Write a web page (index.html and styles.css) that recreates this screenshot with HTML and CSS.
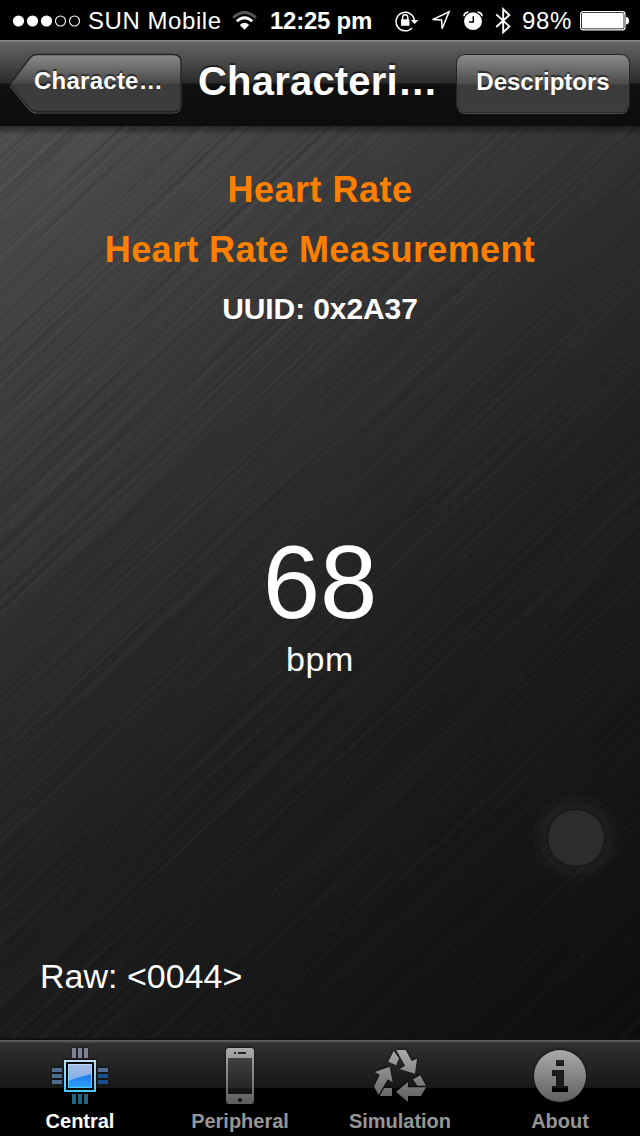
FILE: index.html
```html
<!DOCTYPE html>
<html lang="en">
<head>
<meta charset="utf-8">
<title>Heart Rate Measurement</title>
<link rel="stylesheet" href="styles.css">
</head>
<body>
<div class="app">
  <header class="status">
    <svg class="signal" width="70" height="14" viewBox="0 0 70 14"><g fill="#fff"><circle cx="6.5" cy="7" r="5.6"/><circle cx="20.5" cy="7" r="5.6"/><circle cx="34.5" cy="7" r="5.6"/></g><g fill="none" stroke="#fff" stroke-width="1.1"><circle cx="48.5" cy="7" r="5"/><circle cx="62.5" cy="7" r="5"/></g></svg>
    <span class="carrier">SUN Mobile</span>
    <svg class="wifi" width="26" height="20" viewBox="0 0 26 20"><g fill="none" stroke-width="2.8"><path d="M1.2 6.6Q12.5-3.6 23.8 6.6" stroke="#555"/><path d="M4.8 10.3Q12.5 3.2 20.2 10.3" stroke="#fff"/></g><path d="M7.8 14Q12.5 9.6 17.2 14L12.5 18.8Z" fill="#fff"/></svg>
    <span class="time">12:25 pm</span>
    <svg class="lock" width="24" height="22" viewBox="0 0 24 22"><path d="M17 17.9A9.2 9.2 0 1 1 19.4 10.4" fill="none" stroke="#fff" stroke-width="1.5"/><path d="M15.8 10H23.4L19.6 14Z" fill="#fff"/><rect x="6" y="9.3" width="8.4" height="6.5" fill="#fff"/><path d="M7.6 10V7.4a2.6 2.6 0 0 1 5.2 0V10" fill="none" stroke="#fff" stroke-width="1.4"/></svg>
    <svg class="arrow" width="22" height="22" viewBox="0 0 22 22"><path d="M2.6 9.6L19.1 1.7L12.1 18.7L11.6 10Z" fill="none" stroke="#fff" stroke-width="1.5"/></svg>
    <svg class="alarm" width="20" height="20" viewBox="0 0 20 20"><circle cx="10" cy="10.2" r="8.9" fill="#fff"/><path d="M1 5.2Q1.2 1.6 5.3 1.1M19 5.2Q18.8 1.6 14.7 1.1" fill="none" stroke="#fff" stroke-width="1.7"/><path d="M10.3 5.2V11H6" fill="none" stroke="#000" stroke-width="1.5"/></svg>
    <svg class="bluetooth" width="16" height="28" viewBox="0 0 16 28"><path d="M1.2 7.4L14.4 19.4L8.2 25.2V2.2L14.4 8L1.2 20" fill="none" stroke="#fff" stroke-width="1.9"/></svg>
    <span class="percent">98%</span>
    <svg class="battery" width="50" height="20" viewBox="0 0 50 20"><rect x=".6" y=".6" width="44.4" height="18.2" rx="2.6" fill="none" stroke="#fff" stroke-width="1.2"/><rect x="2" y="2" width="41.6" height="15.4" rx="1" fill="#fff"/><path d="M46 6Q49 6 49 9.7T46 13.4Z" fill="#fff"/></svg>
  </header>

  <nav class="navbar">
    <a class="back">
      <svg class="back-shape" width="174" height="62" viewBox="0 0 174 62">
        <defs><linearGradient id="button" x1="0" y1="0" x2="0" y2="1"><stop offset="0" stop-color="#8b8b8b"/><stop offset=".5" stop-color="#494949"/><stop offset=".53" stop-color="#3b3b3b"/><stop offset="1" stop-color="#3d3d3d"/></linearGradient></defs>
        <path d="M1 32.6L20 56Q23.5 60 28 60H164Q172 60 172 52V34" fill="none" stroke="#555" stroke-width="1.2"/>
        <path d="M1 31.3L20 6Q23.5 1.5 28 1.5H164Q172 1.5 172 9V51Q172 58.5 164 58.5H28Q23.5 58.5 20 54.5Z" fill="url(#button)" stroke="#242424" stroke-width="1.3"/>
      </svg>
      <span class="back-label">Characte…</span>
    </a>
    <h1 class="title">Characteri…</h1>
    <a class="descriptors">Descriptors</a>
  </nav>

  <main class="content">
    <svg class="texture" width="640" height="912" viewBox="0 0 640 912">
      <defs><filter id="brush" x="0" y="0" width="100%" height="100%" color-interpolation-filters="sRGB"><feTurbulence type="fractalNoise" baseFrequency=".0025 .3" numOctaves="3" seed="8"/><feColorMatrix values="0 0 0 0 1  0 0 0 0 1  0 0 0 0 1  .8 0 0 0 -.3"/></filter>
      <filter id="grooves" x="0" y="0" width="100%" height="100%" color-interpolation-filters="sRGB"><feTurbulence type="fractalNoise" baseFrequency=".003 .28" numOctaves="3" seed="21"/><feColorMatrix values="0 0 0 0 0  0 0 0 0 0  0 0 0 0 0  2.4 0 0 0 -1.05"/></filter>
      <linearGradient id="fade" x1="0" y1="0" x2="1" y2="1"><stop offset="0" stop-color="#fff"/><stop offset=".6" stop-color="#aaa"/><stop offset="1" stop-color="#777"/></linearGradient>
      <mask id="sheen"><rect width="640" height="912" fill="url(#fade)"/></mask></defs>
      <g mask="url(#sheen)"><g transform="rotate(-43 320 456)"><rect x="-330" y="-200" width="1300" height="1312" filter="url(#brush)" opacity=".13"/><rect x="-330" y="-200" width="1300" height="1312" filter="url(#grooves)" opacity=".15"/></g></g>
    </svg>
    <h2 class="heading">Heart Rate</h2>
    <h2 class="heading long">Heart Rate Measurement</h2>
    <p class="uuid">UUID: 0x2A37</p>
    <p class="value">68</p>
    <p class="unit">bpm</p>
    <p class="raw">Raw: &lt;0044&gt;</p>
    <div class="touch"></div>
  </main>

  <footer class="tabs">
    <a class="tab active">
      <svg width="60" height="60" viewBox="0 0 60 60">
        <defs><linearGradient id="edge" x1="0" y1="0" x2="0" y2="1"><stop offset="0" stop-color="#bdddf7"/><stop offset="1" stop-color="#49c8fa"/></linearGradient><linearGradient id="core" x1="0" y1="0" x2="0" y2="1"><stop offset="0" stop-color="#a5b9e7"/><stop offset="1" stop-color="#72aee9"/></linearGradient><linearGradient id="corelow" x1="0" y1="0" x2="0" y2="1"><stop offset="0" stop-color="#1c78e9"/><stop offset="1" stop-color="#2b9ff7"/></linearGradient></defs>
        <path d="M22 2h4v10h-4zM28 2h4v10h-4zM34 2h4v10h-4z" fill="#7c8494"/>
        <path d="M22 48h4v10h-4zM28 48h4v10h-4zM34 48h4v10h-4z" fill="#21677f"/>
        <path d="M2 22h10v4H2zM2 28h10v4H2zM2 34h10v4H2z" fill="#4e6d8e"/>
        <path d="M48 28h10v4H48zM48 34h10v4H48z" fill="#1e4f8a"/><path d="M48 22h10v4H48z" fill="#506e99"/>
        <rect x="15" y="15" width="30" height="30" fill="#050708" stroke="url(#edge)" stroke-width="2"/>
        <rect x="18" y="18" width="24" height="24" fill="url(#edge)"/><rect x="19" y="19" width="22" height="22" fill="url(#core)"/>
        <path d="M19 35C26 31 33 31 41 28V41H19Z" fill="url(#corelow)"/>
      </svg>
      <span>Central</span>
    </a>
    <a class="tab">
      <svg width="60" height="60" viewBox="0 0 60 60">
        <defs><linearGradient id="metal" gradientUnits="userSpaceOnUse" x1="0" y1="2" x2="0" y2="58"><stop offset="0" stop-color="#adadad"/><stop offset="1" stop-color="#5c5c5c"/></linearGradient><linearGradient id="glass" x1="0" y1="0" x2="0" y2="1"><stop offset="0" stop-color="#414141"/><stop offset=".83" stop-color="#252525"/><stop offset=".84" stop-color="#171717"/><stop offset="1" stop-color="#151515"/></linearGradient></defs>
        <rect x="16" y="2" width="28" height="56" rx="3" fill="url(#metal)"/><path d="M18 12h24v36H18z" fill="url(#glass)"/><path d="M24 6h2v2h-2zM28 6h8v2h-8z" fill="#222"/><circle cx="30" cy="54" r="2" fill="#111"/>
      </svg>
      <span>Peripheral</span>
    </a>
    <a class="tab">
      <svg width="60" height="60" viewBox="0 0 60 60"><path fill="url(#metal)" d="M23.7 5L29 12.3L26.3 19.3L18.3 15.7ZM26.3 4H35.7L41.7 15L47 12.7L45 27.7L29.7 23L35 19.7ZM19.7 20.7L22.7 36.3L17.7 33.3L8.7 49L4 40.7L9.7 28.7L4.7 26ZM14 42H22V50H9.7ZM38 36V41.3H56L51 50H38V56L26 45.7ZM43 33.3L50.3 29.3L56 39.7H47.3Z"/></svg>
      <span>Simulation</span>
    </a>
    <a class="tab">
      <svg width="60" height="60" viewBox="0 0 60 60"><path fill="url(#metal)" fill-rule="evenodd" d="M30 4a26 26 0 1 1 0 52a26 26 0 1 1 0-52ZM26 14V20H34V14ZM22 24V30H26V40H22V46H38V40H34V24Z"/></svg>
      <span>About</span>
    </a>
  </footer>
</div>
</body>
</html>
```
FILE: styles.css
```css
* { box-sizing: border-box; }
body { margin: 0; background: #000; color: #fff; font-family: "Liberation Sans", Arial, sans-serif; }
h1, h2, p { margin: 0; }
svg { display: block; flex: none; }
.app { width: 640px; height: 1136px; display: flex; flex-direction: column; overflow: hidden; }

.status { height: 40px; padding: 1px 0 0 12px; display: flex; align-items: center; background: #000; font-size: 24px; line-height: 40px; white-space: nowrap; }
.carrier { width: 137px; flex: none; margin-left: 6px; letter-spacing: .55px; }
.wifi { margin-left: 7px; }
.time { width: 104px; flex: none; margin-left: 12px; font-weight: bold; letter-spacing: -.25px; }
.lock { margin-left: 21px; }
.arrow { margin-left: 11px; }
.alarm { margin-left: 11px; }
.bluetooth { margin-left: 12px; }
.percent { width: 51px; flex: none; margin-left: 11px; letter-spacing: .6px; }
.battery { margin-left: 7px; }

.navbar { height: 86px; flex: none; padding: 13px 9px 0; display: flex; align-items: flex-start; background: linear-gradient(#8a8a8a 0 1px, #656565 2px, #2b2b2b 43px, #101010 44px, #0d0d0d 100%); text-shadow: 0 -2px 1px rgba(0,0,0,.55); font-weight: bold; white-space: nowrap; }
.back { width: 174px; height: 62px; display: grid; }
.back-shape, .back-label { grid-area: 1 / 1; }
.back-label { padding-left: 25px; font-size: 24px; line-height: 56px; letter-spacing: .25px; }
.title { width: 257px; margin-left: 15px; font-size: 40px; line-height: 57px; letter-spacing: .2px; }
.descriptors { width: 174px; height: 60px; margin: 1px 0 0 1px; border: 1px solid #242424; border-bottom-color: #4c4c4c; border-radius: 9px; background: linear-gradient(#8b8b8b, #4b4b4b 50%, #3b3b3b 52%, #3d3d3d); box-shadow: inset 0 -1px 0 #292929; font-size: 24px; line-height: 54px; text-align: center; letter-spacing: 0; }

.content { position: relative; height: 912px; flex: none; display: flex; flex-direction: column; align-items: center; background: linear-gradient(rgba(0,0,0,.45), transparent 9px), linear-gradient(145deg, #4f4f4f 0%, #3c3c3c 22%, #2d2d2d 39%, #1f1f1f 58%, #151515 81%, #0e0e0e 100%); text-align: center; }
.texture { position: absolute; inset: 0; }
.content h2, .content p { position: relative; white-space: nowrap; }
.heading { color: #ff8000; font-size: 36px; line-height: 60px; letter-spacing: .5px; }
.heading:first-of-type { margin-top: 34px; }
.heading.long { letter-spacing: .37px; }
.uuid { font-size: 30px; font-weight: bold; line-height: 58px; letter-spacing: -.1px; }
.value { margin-top: 187px; font-size: 103px; line-height: 116px; }
.unit { margin-top: -2px; font-size: 34px; line-height: 40px; letter-spacing: .7px; }
.raw { align-self: flex-start; margin: 277px 0 0 40px; font-size: 34px; line-height: 40px; }
.touch { position: absolute; left: 547px; top: 683px; width: 58px; height: 58px; border: 1px solid #151515; border-radius: 50%; background: rgba(85,85,85,.38); box-shadow: 0 0 0 8px rgba(255,255,255,.025), 0 0 0 15px rgba(255,255,255,.015); }

.tabs { height: 98px; display: grid; grid-template-columns: repeat(4, 160px); background: linear-gradient(#111 0 2px, #5c5c5c 2px 3px, #494949 4px, #303030 5px, #171717 50px, #000 50px); }
.tab { display: flex; flex-direction: column; align-items: center; padding-top: 8px; color: #969696; font-size: 20px; font-weight: bold; line-height: 30px; letter-spacing: -.02px; }
.tab svg { filter: drop-shadow(0 -1px 1px rgba(0,0,0,.6)); }
.tab.active { color: #fff; }
```
